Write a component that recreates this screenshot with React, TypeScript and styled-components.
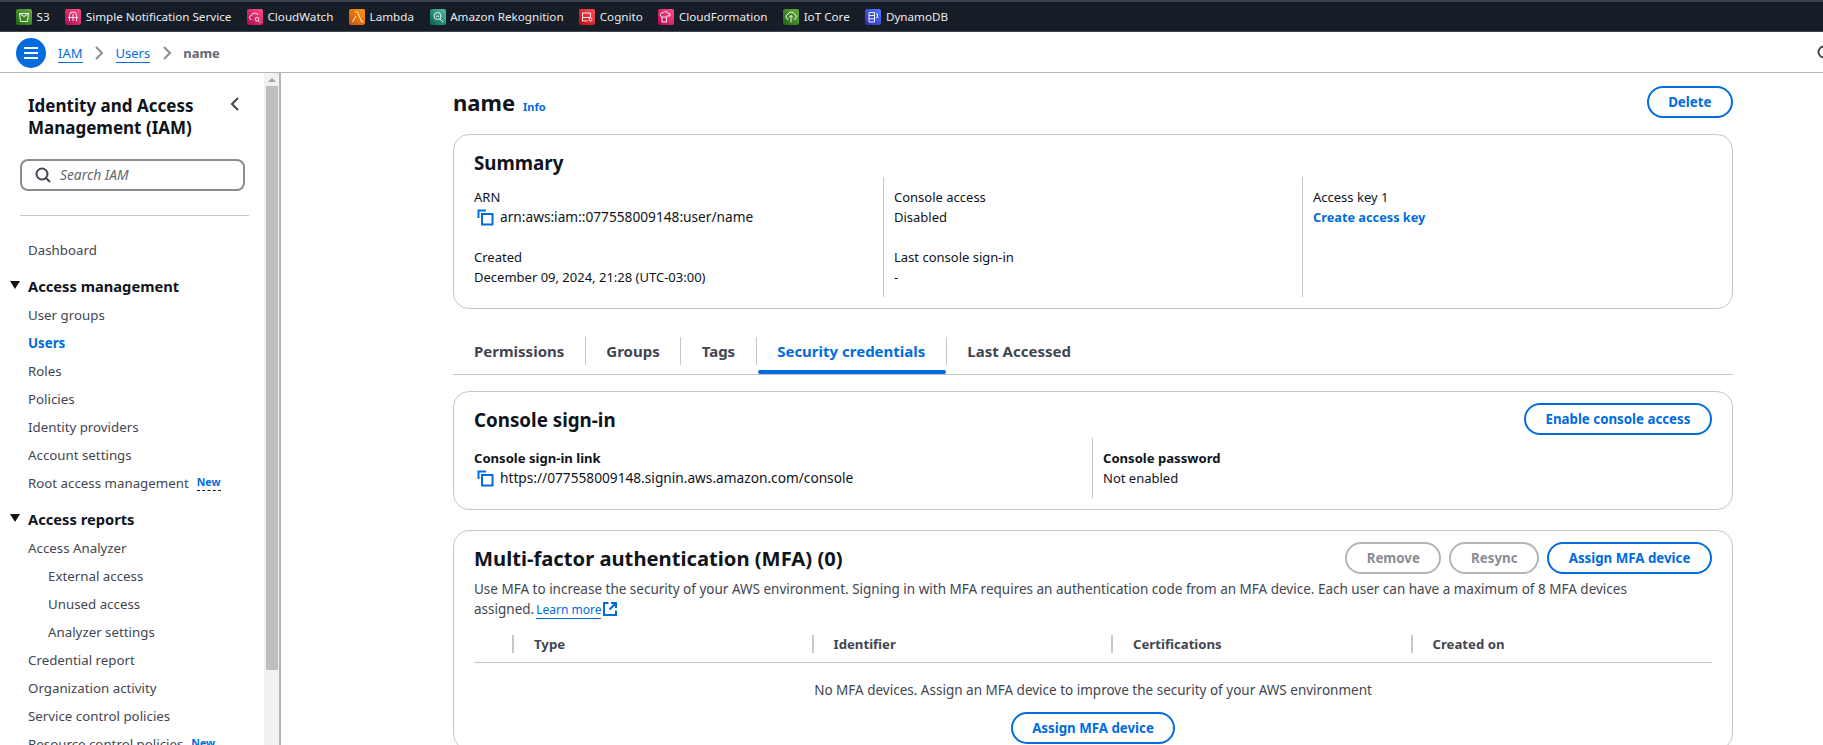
import * as React from 'react';
import styled, { createGlobalStyle } from 'styled-components';

const blue = '#006ce0';
const ink = '#0f141a';
const body = '#424650';
const line = '#c6c6cd';

const GlobalStyle = createGlobalStyle`
  html, body {
    margin: 0;
    height: 100%;
    overflow: hidden;
    background: #fff;
    font-family: "Noto Sans", "Open Sans", sans-serif;
    font-size: 14px;
    color: ${ink};
  }
  * { box-sizing: border-box; }
`;

const Page = styled.div`
  display: flex;
  flex-direction: column;
  height: 745px;
  overflow: hidden;
`;

const Favorites = styled.div`
  flex: none;
  display: flex;
  align-items: center;
  height: 32px;
  padding: 1px 0 0 16px;
  background: #161d26;
  border-top: 2px solid #3a424d;
  border-bottom: 1px solid #414750;
  gap: 15.7px;
`;

const Favorite = styled.div`
  display: flex;
  align-items: center;
  gap: 4.5px;
  color: #e9ebed;
  font-size: 11.65px;
  line-height: 16px;
`;

const IconTile = styled.span<{ $from: string; $to: string }>`
  display: block;
  width: 16px;
  height: 16px;
  border-radius: 2px;
  background: linear-gradient(45deg, ${(p) => p.$from}, ${(p) => p.$to});
`;

const Breadcrumbs = styled.div`
  flex: none;
  display: flex;
  align-items: center;
  height: 41px;
  padding: 2px 0 0 16px;
  border-bottom: 1px solid #b4b4bb;
  position: relative;
`;

const MenuButton = styled.span`
  display: flex;
  align-items: center;
  justify-content: center;
  width: 30px;
  height: 30px;
  border-radius: 50%;
  background: ${blue};
  margin-right: 12px;
`;

const Crumb = styled.a`
  color: ${blue};
  font-size: 13px;
  line-height: 18px;
  border-bottom: 1px solid ${blue};
`;

const CrumbCurrent = styled.span`
  color: #656871;
  font-size: 13px;
  font-weight: 700;
  line-height: 18px;
`;

const CrumbArrow = styled.svg`
  width: 16px;
  height: 16px;
  margin: 0 8.5px;
  fill: none;
  stroke: #8c8c94;
  stroke-width: 2;
`;

const CornerSearch = styled.svg`
  position: absolute;
  right: -10px;
  top: 13px;
  width: 16px;
  height: 16px;
  fill: none;
  stroke: ${body};
  stroke-width: 2;
`;

const Body = styled.div`
  flex: 1;
  min-height: 0;
  display: flex;
`;

const Sidebar = styled.aside`
  flex: none;
  width: 281px;
  display: flex;
  border-right: 2px solid #b4b4bb;
  overflow: hidden;
`;

const SideContent = styled.div`
  flex: 1;
  min-width: 0;
  padding: 0 20px 0 10px;
`;

const SideHeader = styled.div`
  display: flex;
  justify-content: space-between;
  padding: 21.5px 1px 0 18px;
`;

const SideTitle = styled.h2`
  margin: 0;
  font-size: 17px;
  font-weight: 700;
  line-height: 22px;
  color: ${ink};
`;

const BackIcon = styled.svg`
  width: 16px;
  height: 16px;
  margin: 1px 0 0;
  fill: none;
  stroke: ${body};
  stroke-width: 2;
`;

const SearchBox = styled.div`
  display: flex;
  align-items: center;
  gap: 9px;
  height: 32px;
  margin: 20px 0 0 10px;
  padding-left: 13px;
  width: 225px;
  border: 2px solid #8c8c94;
  border-radius: 8px;
  color: #656871;
  font-size: 13.8px;
  font-style: italic;
`;

const SearchIcon = styled.svg`
  width: 16px;
  height: 16px;
  fill: none;
  stroke: ${body};
  stroke-width: 2;
`;

const SideRule = styled.hr`
  margin: 24px 0 0 10px;
  width: 229px;
  border: 0;
  border-top: 1px solid ${line};
`;

const NavList = styled.div`
  margin-top: 20px;
  padding-left: 18px;
`;

const NavItem = styled.div<{ $active?: boolean; $nested?: boolean }>`
  display: flex;
  align-items: center;
  height: 28px;
  padding-left: ${(p) => (p.$nested ? '20px' : '0')};
  color: ${(p) => (p.$active ? blue : body)};
  font-size: 13.3px;
  font-weight: ${(p) => (p.$active ? 700 : 400)};
  white-space: nowrap;
`;

const NavSection = styled.div`
  position: relative;
  display: flex;
  align-items: center;
  height: 30px;
  margin-top: 7px;
  font-size: 14.7px;
  font-weight: 700;
  color: ${ink};

  &::before {
    content: '';
    position: absolute;
    left: -18px;
    top: 10px;
    border-left: 5px solid transparent;
    border-right: 5px solid transparent;
    border-top: 8px solid ${ink};
  }
`;

const NewBadge = styled.span`
  margin-left: 8px;
  color: ${blue};
  font-size: 10.6px;
  font-weight: 700;
  line-height: 15px;
  border-bottom: 1px dashed ${ink};
`;

const Scrollbar = styled.div`
  flex: none;
  width: 15px;
  display: flex;
  flex-direction: column;
  align-items: center;
  background: #f1f1f1;
`;

const ScrollArrow = styled.div`
  flex: none;
  margin: 5px 0 4px;
  border-left: 4px solid transparent;
  border-right: 4px solid transparent;
  border-bottom: 4px solid #a3a3a3;
`;

const ScrollThumb = styled.div`
  flex: none;
  width: 12px;
  height: 584px;
  background: #bebebe;
`;

const Main = styled.main`
  flex: 1;
  min-width: 0;
  padding: 0 90px 0 172px;
`;

const TitleRow = styled.div`
  display: flex;
  align-items: center;
  justify-content: space-between;
  height: 57px;
  margin-bottom: 4px;
`;

const TitleGroup = styled.div`
  display: flex;
  align-items: baseline;
  gap: 8px;
`;

const Title = styled.h1`
  margin: 0;
  font-size: 22px;
  font-weight: 700;
  line-height: 30px;
`;

const InfoLink = styled.a`
  color: ${blue};
  font-size: 11px;
  font-weight: 700;
`;

const Button = styled.button<{ $disabled?: boolean }>`
  height: 32px;
  padding: 0 19.6px;
  border: 2px solid ${(p) => (p.$disabled ? '#b4b4bb' : blue)};
  border-radius: 20px;
  background: #fff;
  color: ${(p) => (p.$disabled ? '#8c8c94' : blue)};
  font-family: inherit;
  font-size: 13.3px;
  font-weight: 700;
  line-height: 18px;
`;

const Card = styled.section`
  border: 1px solid ${line};
  border-radius: 16px;
  padding: 0 20px;
`;

const SummaryCard = styled(Card)`
  height: 175px;
  padding-top: 15px;
`;

const CardTitle = styled.h2<{ $large?: boolean }>`
  margin: 0;
  font-size: ${(p) => (p.$large ? '20.2px' : '18.75px')};
  font-weight: 700;
  line-height: 26px;
`;

const SummaryGrid = styled.div`
  display: grid;
  grid-template-columns: 409px 419px 1fr;
  height: 120px;
  margin-top: 1px;
`;

const Column = styled.div`
  padding: 10px 0 0 10px;
  display: flex;
  flex-direction: column;
  gap: 20px;
  border-left: 1px solid ${line};

  &:first-child {
    padding-left: 0;
    border-left: 0;
  }
`;

const Pair = styled.div`
  font-size: 13px;
  line-height: 20px;
  color: ${ink};
`;

const Strong = styled.div`
  font-size: 13.1px;
  font-weight: 700;
`;

const ValueLink = styled.a`
  display: block;
  color: ${blue};
  font-size: 12.75px;
  font-weight: 700;
`;

const CopyRow = styled.div`
  display: flex;
  align-items: center;
  gap: 6px;
  padding-left: 3px;
  font-size: 13.7px;
`;

const CopyIcon = styled.svg`
  width: 17px;
  height: 17px;
  fill: none;
  stroke: ${blue};
  stroke-width: 2;
`;

const Tabs = styled.div`
  display: flex;
  align-items: center;
  height: 40px;
  margin-top: 26px;
  padding-left: 0.5px;
  border-bottom: 1px solid ${line};
`;

const Tab = styled.div<{ $active?: boolean }>`
  position: relative;
  display: flex;
  align-items: center;
  height: 28px;
  margin-bottom: 8px;
  padding: 0 20.5px;
  font-size: 15px;
  font-weight: 700;
  color: ${(p) => (p.$active ? blue : body)};

  & + & {
    border-left: 1px solid ${line};
  }

  ${(p) =>
    p.$active
      ? `&::after {
    content: '';
    position: absolute;
    left: 1px;
    right: 0;
    bottom: -9px;
    height: 4px;
    border-radius: 2px;
    background: ${blue};
  }`
      : ''}
`;

const ConsoleCard = styled(Card)`
  height: 119px;
  margin-top: 16px;
  padding-top: 11px;
`;

const CardHead = styled.div`
  display: flex;
  align-items: center;
  justify-content: space-between;
`;

const ConsoleTitle = styled(CardTitle)`
  margin-top: 2px;
`;

const ConsoleGrid = styled.div`
  display: grid;
  grid-template-columns: 618px 1fr;
  height: 60px;
  margin-top: 3px;
`;

const MfaCard = styled(Card)`
  height: 220px;
  margin-top: 20px;
  padding-top: 11px;
`;

const ButtonRow = styled.div`
  display: flex;
  gap: 8px;
`;

const MfaText = styled.p`
  margin: 5px 0 0;
  width: 1170px;
  font-size: 13.5px;
  line-height: 20px;
  color: ${body};
`;

const LearnMore = styled.a`
  margin-left: 2px;
  color: ${blue};
  font-size: 12px;
  border-bottom: 1px solid ${blue};
`;

const ExternalIcon = styled.svg`
  width: 14px;
  height: 14px;
  margin-left: 2px;
  vertical-align: -2px;
  fill: none;
  stroke: ${blue};
  stroke-width: 2;
`;

const TableHead = styled.div`
  display: grid;
  grid-template-columns: 38px repeat(4, 299.5px);
  height: 36px;
  padding-top: 8px;
  margin-top: 7px;
  border-bottom: 1px solid ${line};
`;

const HeadCell = styled.div`
  height: 18px;
  padding-left: 20px;
  border-left: 2px solid ${line};
  font-size: 13.2px;
  font-weight: 700;
  line-height: 18px;
  color: ${body};
`;

const Empty = styled.div`
  display: flex;
  flex-direction: column;
  align-items: center;
  gap: 12px;
  padding-top: 17px;
  font-size: 13.5px;
  line-height: 20px;
  color: ${body};
`;

const favorites = [
  { label: 'S3', from: '#1b660f', to: '#6cae3e', glyph: 'M3.500 4.500h9l-1 8h-7zM3.500 4.500l4.500 3 4.500-3' },
  { label: 'Simple Notification Service', from: '#b0084d', to: '#ff4f8b', glyph: 'M4.500 12V6.500a3.500 3.500 0 0 1 7 0V12M3 8.500h10M8 5v7' },
  { label: 'CloudWatch', from: '#b0084d', to: '#ff4f8b', glyph: 'M4.500 10.500a2 2 0 0 1 0-4 3.500 3.500 0 0 1 6.500-.5M10 12a1.800 1.800 0 1 0 0-3.600 1.800 1.800 0 0 0 0 3.600zM11.500 12l1.500 1.500' },
  { label: 'Lambda', from: '#c8511b', to: '#ff9900', glyph: 'M3.500 13l3.500-6M6 3h2.500l4 9.500H14' },
  { label: 'Amazon Rekognition', from: '#055f4e', to: '#56c0a7', glyph: 'M7.500 10.500a3.500 3.500 0 1 0 0-7 3.500 3.500 0 0 0 0 7zM10 10l3 3M6 7.200h3' },
  { label: 'Cognito', from: '#bd0816', to: '#ff5252', glyph: 'M3.500 4h8v4.500h-8zM3.500 8.500V12h5M10 10.500a1.500 1.500 0 1 0 3 0 1.500 1.500 0 0 0-3 0' },
  { label: 'CloudFormation', from: '#b0084d', to: '#ff4f8b', glyph: 'M4 8h4.500v5H4zM4 8a2.200 2.200 0 0 1 1.200-4.300 2.800 2.800 0 0 1 5 1H12v2.300H8.500' },
  { label: 'IoT Core', from: '#1b660f', to: '#6cae3e', glyph: 'M5.500 10.500a2.700 2.700 0 0 1-.5-5.300 3.400 3.400 0 0 1 6.300 0 2.700 2.700 0 0 1-.5 5.300M8 6.500v7M6 8.500l2-2 2 2' },
  { label: 'DynamoDB', from: '#2e27ad', to: '#527fff', glyph: 'M4 3.500h5.500v9.500H4zM4 6.500h5.500M4 9.800h5.500M11 5h1.500v3.500H11' },
];

const CopyGlyph = () => (
  <CopyIcon viewBox="0 0 17 17">
    <path d="M1.500 9V1.500H9" />
    <rect x="5" y="5" width="10.500" height="10.500" />
  </CopyIcon>
);

export default function App() {
  return (
    <Page>
      <GlobalStyle />
      <Favorites>
        {favorites.map((f) => (
          <Favorite key={f.label}>
            <IconTile $from={f.from} $to={f.to}>
              <svg width="16" height="16" viewBox="0 0 16 16" fill="none" stroke="#fff" strokeWidth="0.9">
                <path d={f.glyph} />
              </svg>
            </IconTile>
            {f.label}
          </Favorite>
        ))}
      </Favorites>
      <Breadcrumbs>
        <MenuButton>
          <svg width="16" height="16" viewBox="0 0 16 16" fill="none" stroke="#fff" strokeWidth="2">
            <path d="M1 3h14M1 8h14M1 13h14" />
          </svg>
        </MenuButton>
        <Crumb>IAM</Crumb>
        <CrumbArrow viewBox="0 0 16 16">
          <path d="M5 2l6 6-6 6" />
        </CrumbArrow>
        <Crumb>Users</Crumb>
        <CrumbArrow viewBox="0 0 16 16">
          <path d="M5 2l6 6-6 6" />
        </CrumbArrow>
        <CrumbCurrent>name</CrumbCurrent>
        <CornerSearch viewBox="0 0 16 16">
          <circle cx="7" cy="7" r="5.500" />
          <path d="M11 11l4 4" />
        </CornerSearch>
      </Breadcrumbs>
      <Body>
        <Sidebar>
          <SideContent>
            <SideHeader>
              <SideTitle>
                Identity and Access
                <br />
                Management (IAM)
              </SideTitle>
              <BackIcon viewBox="0 0 16 16">
                <path d="M11 2L5 8l6 6" />
              </BackIcon>
            </SideHeader>
            <SearchBox>
              <SearchIcon viewBox="0 0 16 16">
                <circle cx="7" cy="7" r="5.500" />
                <path d="M11 11l4 4" />
              </SearchIcon>
              Search IAM
            </SearchBox>
            <SideRule />
            <NavList>
              <NavItem>Dashboard</NavItem>
              <NavSection>Access management</NavSection>
              <NavItem>User groups</NavItem>
              <NavItem $active>Users</NavItem>
              <NavItem>Roles</NavItem>
              <NavItem>Policies</NavItem>
              <NavItem>Identity providers</NavItem>
              <NavItem>Account settings</NavItem>
              <NavItem>
                Root access management
                <NewBadge>New</NewBadge>
              </NavItem>
              <NavSection>Access reports</NavSection>
              <NavItem>Access Analyzer</NavItem>
              <NavItem $nested>External access</NavItem>
              <NavItem $nested>Unused access</NavItem>
              <NavItem $nested>Analyzer settings</NavItem>
              <NavItem>Credential report</NavItem>
              <NavItem>Organization activity</NavItem>
              <NavItem>Service control policies</NavItem>
              <NavItem>
                Resource control policies
                <NewBadge>New</NewBadge>
              </NavItem>
            </NavList>
          </SideContent>
          <Scrollbar>
            <ScrollArrow />
            <ScrollThumb />
          </Scrollbar>
        </Sidebar>
        <Main>
          <TitleRow>
            <TitleGroup>
              <Title>name</Title>
              <InfoLink>Info</InfoLink>
            </TitleGroup>
            <Button>Delete</Button>
          </TitleRow>
          <SummaryCard>
            <CardTitle>Summary</CardTitle>
            <SummaryGrid>
              <Column>
                <Pair>
                  ARN
                  <CopyRow>
                    <CopyGlyph />
                    arn:aws:iam::077558009148:user/name
                  </CopyRow>
                </Pair>
                <Pair>
                  Created
                  <div>December 09, 2024, 21:28 (UTC-03:00)</div>
                </Pair>
              </Column>
              <Column>
                <Pair>
                  Console access
                  <div>Disabled</div>
                </Pair>
                <Pair>
                  Last console sign-in
                  <div>-</div>
                </Pair>
              </Column>
              <Column>
                <Pair>
                  Access key 1
                  <ValueLink>Create access key</ValueLink>
                </Pair>
              </Column>
            </SummaryGrid>
          </SummaryCard>
          <Tabs>
            <Tab>Permissions</Tab>
            <Tab>Groups</Tab>
            <Tab>Tags</Tab>
            <Tab $active>Security credentials</Tab>
            <Tab>Last Accessed</Tab>
          </Tabs>
          <ConsoleCard>
            <CardHead>
              <ConsoleTitle>Console sign-in</ConsoleTitle>
              <Button>Enable console access</Button>
            </CardHead>
            <ConsoleGrid>
              <Column>
                <Pair>
                  <Strong>Console sign-in link</Strong>
                  <CopyRow>
                    <CopyGlyph />
                    https://077558009148.signin.aws.amazon.com/console
                  </CopyRow>
                </Pair>
              </Column>
              <Column>
                <Pair>
                  <Strong>Console password</Strong>
                  <div>Not enabled</div>
                </Pair>
              </Column>
            </ConsoleGrid>
          </ConsoleCard>
          <MfaCard>
            <CardHead>
              <CardTitle $large>Multi-factor authentication (MFA) (0)</CardTitle>
              <ButtonRow>
                <Button $disabled>Remove</Button>
                <Button $disabled>Resync</Button>
                <Button>Assign MFA device</Button>
              </ButtonRow>
            </CardHead>
            <MfaText>
              Use MFA to increase the security of your AWS environment. Signing in with MFA requires an authentication
              code from an MFA device. Each user can have a maximum of 8 MFA devices assigned.
              <LearnMore>Learn more</LearnMore>
              <ExternalIcon viewBox="0 0 14 14">
                <path d="M5.500 1H1v12h12V8.500M8 1h5v5M13 1L6.500 7.500" />
              </ExternalIcon>
            </MfaText>
            <TableHead>
              <span />
              <HeadCell>Type</HeadCell>
              <HeadCell>Identifier</HeadCell>
              <HeadCell>Certifications</HeadCell>
              <HeadCell>Created on</HeadCell>
            </TableHead>
            <Empty>
              No MFA devices. Assign an MFA device to improve the security of your AWS environment
              <Button>Assign MFA device</Button>
            </Empty>
          </MfaCard>
        </Main>
      </Body>
    </Page>
  );
}
